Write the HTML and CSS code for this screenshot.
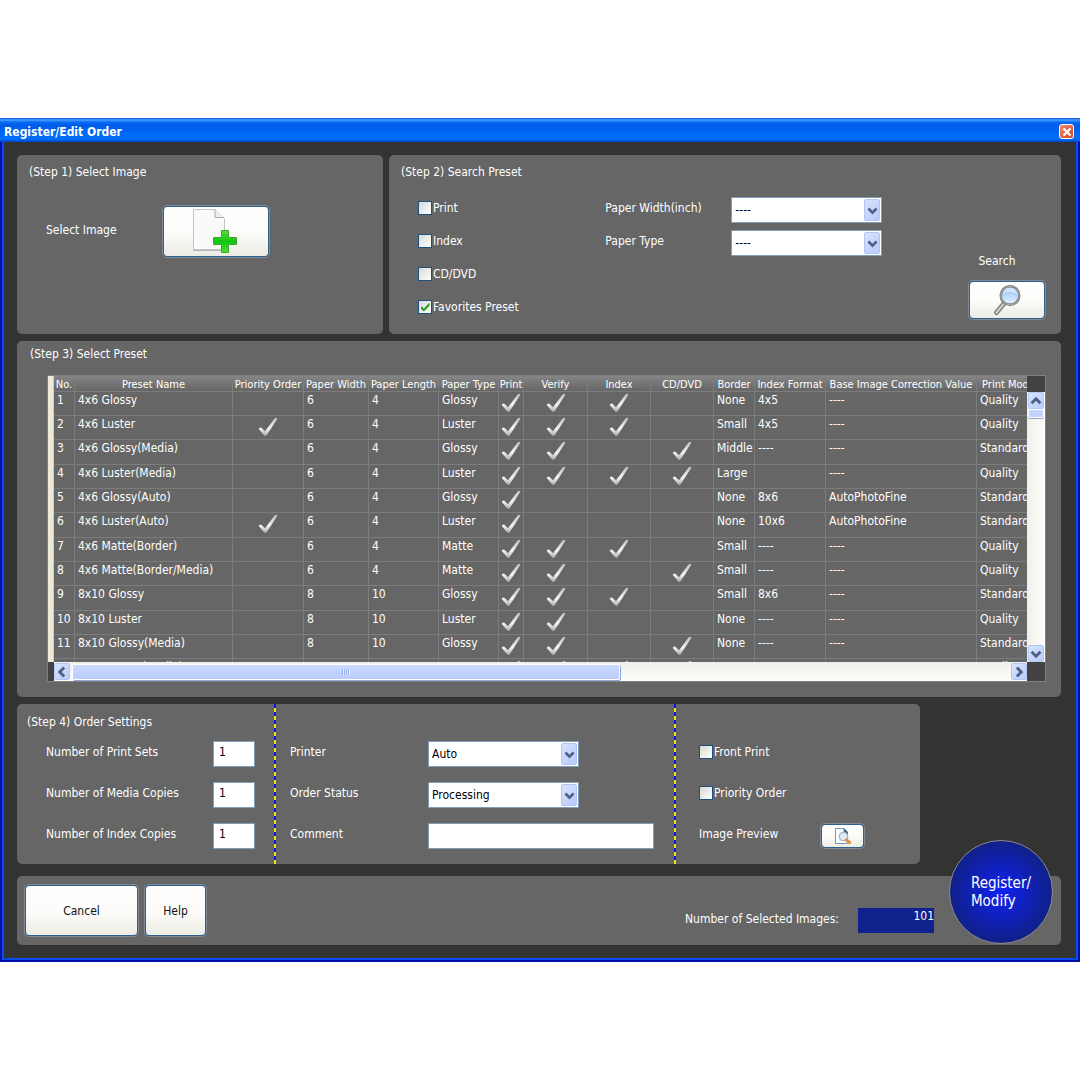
FILE: index.html
```html
<!DOCTYPE html>
<html lang="en">
<head>
<meta charset="utf-8">
<title>Register/Edit Order</title>
<link rel="stylesheet" href="styles.css">
</head>
<body>
<svg class="defs" aria-hidden="true">
  <defs>
    <linearGradient id="tickFill" x1="0" y1="0" x2="0" y2="1"><stop offset="0" stop-color="#bdbdbd"/><stop offset=".6" stop-color="#f4f4f4"/><stop offset="1" stop-color="#a8a8a8"/></linearGradient>
    <linearGradient id="plusFill" x1="0" y1="0" x2="0" y2="1"><stop offset="0" stop-color="#5fdc3c"/><stop offset=".5" stop-color="#0fc512"/><stop offset="1" stop-color="#4fdc30"/></linearGradient>
    <linearGradient id="lensFill" x1="0" y1="0" x2="0" y2="1"><stop offset="0" stop-color="#dcecff"/><stop offset=".5" stop-color="#b9daff"/><stop offset="1" stop-color="#e8f6ff"/></linearGradient>
    <symbol id="tick" viewBox="0 0 20 20"><path d="M.7 12 Q1.5 9.600 3.400 10.800 L7 14.200 L16.600 1.400 Q18.400 -.2 19.400 1.700 L8.800 18 Q7.200 20 5.600 17.800 Z" fill="url(#tickFill)"/></symbol>
    <symbol id="chev" viewBox="0 0 10 10"><path d="M1.300 3.200 L5 6.900 L8.700 3.200" fill="none" stroke="#4d6185" stroke-width="2.400"/></symbol>
  </defs>
</svg>
<main class="window">
  <header class="titlebar">
    <h1>Register/Edit Order</h1>
    <button class="close" type="button" aria-label="Close"><svg viewBox="0 0 10 10"><path d="M1.500 1.500 L8.500 8.500 M8.500 1.500 L1.500 8.500" stroke="#fff" stroke-width="2.300"/></svg></button>
  </header>
  <form class="content">
    <div class="top">
      <section class="panel step1">
        <h2>(Step 1) Select Image</h2>
        <div class="pick">
          <label for="pick">Select Image</label>
          <button class="btn pick-btn" id="pick" type="button" aria-label="Select Image">
            <svg width="48" height="46" viewBox="0 0 48 46"><path d="M1.500 .5 H23 L32.500 9.500 V40.500 H1.500 Z" fill="#fafafa" stroke="#c4c4c4"/><path d="M1 41.500 H33" stroke="#b5b5b5"/><path d="M23 .5 V8.500 H32" fill="#eee" stroke="#aaa"/><path d="M29.500 21.500 H36.500 V28.500 H44.500 V35.500 H36.500 V43.500 H29.500 V35.500 H21.500 V28.500 H29.500 Z" fill="url(#plusFill)" stroke="#3ea52c"/></svg>
          </button>
        </div>
      </section>
      <section class="panel step2">
        <h2>(Step 2) Search Preset</h2>
        <div class="search">
          <div class="rows">
            <label class="check"><input type="checkbox">Print</label>
            <label class="check"><input type="checkbox">Index</label>
            <label class="check"><input type="checkbox">CD/DVD</label>
            <label class="check"><input type="checkbox" checked>Favorites Preset</label>
          </div>
          <div class="rows">
            <div class="field"><label for="pw">Paper Width(inch)</label><span class="combo"><select id="pw"><option>----</option></select><i><svg><use href="#chev"/></svg></i></span></div>
            <div class="field"><label for="pt">Paper Type</label><span class="combo"><select id="pt"><option>----</option></select><i><svg><use href="#chev"/></svg></i></span></div>
          </div>
          <div class="go">
            <label for="go">Search</label>
            <button class="btn go-btn" id="go" type="button">
              <svg width="30" height="34" viewBox="0 0 30 34"><path d="M12 20.500 L4.500 29.500" stroke="#777" stroke-width="5" stroke-linecap="round"/><path d="M12 20.500 L4.500 29.500" stroke="#c9c9c9" stroke-width="2.600" stroke-linecap="round"/><circle cx="18" cy="12.500" r="9.300" fill="url(#lensFill)" stroke="#777" stroke-width="2.400"/><circle cx="18" cy="12.500" r="9.300" fill="none" stroke="#b9b9b9" stroke-width=".8"/><path d="M11 12 Q18 8 25 12" stroke="#9cc4ee" fill="none"/></svg>
            </button>
          </div>
        </div>
      </section>
    </div>

    <section class="panel step3">
      <h2>(Step 3) Select Preset</h2>
      <div class="grid">
        <div class="strip"></div>
        <div class="view">
          <table>
            <colgroup><col class="c-no"><col class="c-name"><col class="c-prio"><col class="c-width"><col class="c-length"><col class="c-type"><col class="c-print"><col class="c-verify"><col class="c-tick"><col class="c-tick"><col class="c-border"><col class="c-format"><col class="c-base"><col class="c-mode"></colgroup>
            <thead><tr><th>No.</th><th>Preset Name</th><th>Priority Order</th><th>Paper Width</th><th>Paper Length</th><th>Paper Type</th><th>Print</th><th>Verify</th><th>Index</th><th>CD/DVD</th><th>Border</th><th>Index Format</th><th>Base Image Correction Value</th><th>Print Mode</th></tr></thead>
            <tbody>
              <tr><td>1</td><td>4x6 Glossy</td><td></td><td>6</td><td>4</td><td>Glossy</td><td><svg><use href="#tick"/></svg></td><td><svg><use href="#tick"/></svg></td><td><svg><use href="#tick"/></svg></td><td></td><td>None</td><td>4x5</td><td>----</td><td>Quality</td></tr>
              <tr><td>2</td><td>4x6 Luster</td><td><svg><use href="#tick"/></svg></td><td>6</td><td>4</td><td>Luster</td><td><svg><use href="#tick"/></svg></td><td><svg><use href="#tick"/></svg></td><td><svg><use href="#tick"/></svg></td><td></td><td>Small</td><td>4x5</td><td>----</td><td>Quality</td></tr>
              <tr><td>3</td><td>4x6 Glossy(Media)</td><td></td><td>6</td><td>4</td><td>Glossy</td><td><svg><use href="#tick"/></svg></td><td><svg><use href="#tick"/></svg></td><td></td><td><svg><use href="#tick"/></svg></td><td>Middle</td><td>----</td><td>----</td><td>Standard</td></tr>
              <tr><td>4</td><td>4x6 Luster(Media)</td><td></td><td>6</td><td>4</td><td>Luster</td><td><svg><use href="#tick"/></svg></td><td><svg><use href="#tick"/></svg></td><td><svg><use href="#tick"/></svg></td><td><svg><use href="#tick"/></svg></td><td>Large</td><td></td><td>----</td><td>Quality</td></tr>
              <tr><td>5</td><td>4x6 Glossy(Auto)</td><td></td><td>6</td><td>4</td><td>Glossy</td><td><svg><use href="#tick"/></svg></td><td></td><td></td><td></td><td>None</td><td>8x6</td><td>AutoPhotoFine</td><td>Standard</td></tr>
              <tr><td>6</td><td>4x6 Luster(Auto)</td><td><svg><use href="#tick"/></svg></td><td>6</td><td>4</td><td>Luster</td><td><svg><use href="#tick"/></svg></td><td></td><td></td><td></td><td>None</td><td>10x6</td><td>AutoPhotoFine</td><td>Standard</td></tr>
              <tr><td>7</td><td>4x6 Matte(Border)</td><td></td><td>6</td><td>4</td><td>Matte</td><td><svg><use href="#tick"/></svg></td><td><svg><use href="#tick"/></svg></td><td><svg><use href="#tick"/></svg></td><td></td><td>Small</td><td>----</td><td>----</td><td>Quality</td></tr>
              <tr><td>8</td><td>4x6 Matte(Border/Media)</td><td></td><td>6</td><td>4</td><td>Matte</td><td><svg><use href="#tick"/></svg></td><td><svg><use href="#tick"/></svg></td><td></td><td><svg><use href="#tick"/></svg></td><td>Small</td><td>----</td><td>----</td><td>Quality</td></tr>
              <tr><td>9</td><td>8x10 Glossy</td><td></td><td>8</td><td>10</td><td>Glossy</td><td><svg><use href="#tick"/></svg></td><td><svg><use href="#tick"/></svg></td><td><svg><use href="#tick"/></svg></td><td></td><td>Small</td><td>8x6</td><td>----</td><td>Standard</td></tr>
              <tr><td>10</td><td>8x10 Luster</td><td></td><td>8</td><td>10</td><td>Luster</td><td><svg><use href="#tick"/></svg></td><td><svg><use href="#tick"/></svg></td><td></td><td></td><td>None</td><td>----</td><td>----</td><td>Quality</td></tr>
              <tr><td>11</td><td>8x10 Glossy(Media)</td><td></td><td>8</td><td>10</td><td>Glossy</td><td><svg><use href="#tick"/></svg></td><td><svg><use href="#tick"/></svg></td><td></td><td><svg><use href="#tick"/></svg></td><td>None</td><td>----</td><td>----</td><td>Standard</td></tr>
              <tr><td>12</td><td>8x10 Luster(Media)</td><td></td><td>8</td><td>10</td><td>Luster</td><td><svg><use href="#tick"/></svg></td><td><svg><use href="#tick"/></svg></td><td><svg><use href="#tick"/></svg></td><td><svg><use href="#tick"/></svg></td><td>None</td><td>----</td><td>----</td><td>Quality</td></tr>
            </tbody>
          </table>
        </div>
        <div class="corner"></div>
        <div class="vbar">
          <button class="arrow up" type="button" aria-label="Scroll up"><svg><use href="#chev"/></svg></button>
          <div class="vthumb"></div>
          <button class="arrow down" type="button" aria-label="Scroll down"><svg><use href="#chev"/></svg></button>
        </div>
        <div class="corner"></div>
        <div class="hbar">
          <button class="arrow left" type="button" aria-label="Scroll left"><svg><use href="#chev"/></svg></button>
          <div class="track"><div class="hthumb"><span class="grip"></span></div></div>
          <button class="arrow right" type="button" aria-label="Scroll right"><svg><use href="#chev"/></svg></button>
        </div>
        <div class="corner"></div>
      </div>
    </section>

    <section class="panel step4">
      <div class="col counts">
        <h2>(Step 4) Order Settings</h2>
        <div class="field"><label for="n1">Number of Print Sets</label><input class="num" id="n1" value="1"></div>
        <div class="field"><label for="n2">Number of Media Copies</label><input class="num" id="n2" value="1"></div>
        <div class="field"><label for="n3">Number of Index Copies</label><input class="num" id="n3" value="1"></div>
      </div>
      <div class="divider"></div>
      <div class="col options">
        <div class="field"><label for="pr">Printer</label><span class="combo"><select id="pr"><option>Auto</option></select><i><svg><use href="#chev"/></svg></i></span></div>
        <div class="field"><label for="os">Order Status</label><span class="combo"><select id="os"><option>Processing</option></select><i><svg><use href="#chev"/></svg></i></span></div>
        <div class="field"><label for="cm">Comment</label><input class="comment" id="cm"></div>
      </div>
      <div class="divider"></div>
      <div class="col extras">
        <label class="check"><input type="checkbox">Front Print</label>
        <label class="check"><input type="checkbox">Priority Order</label>
        <div class="field"><label for="pv">Image Preview</label>
          <button class="btn pv-btn" id="pv" type="button">
            <svg width="18" height="18" viewBox="0 0 18 18"><path d="M1.500 1.500 H10 L13.500 5 V16.500 H1.500 Z" fill="#fff" stroke="#7b93b8"/><path d="M9.500 1 L14 5.500 V11 L10 7 Z" fill="#3f587f"/><circle cx="9.500" cy="9.500" r="4.200" fill="#dcebf8" stroke="#a3b3c6" stroke-width="1.300"/><path d="M12.500 13 L15.500 15.500" stroke="#e0913a" stroke-width="3.200" stroke-linecap="round"/></svg>
          </button>
        </div>
      </div>
    </section>

    <footer class="panel foot">
      <button class="btn cancel" type="button">Cancel</button>
      <button class="btn help" type="button">Help</button>
      <label class="total" for="sel">Number of Selected Images:</label>
      <output class="selected" id="sel">101</output>
      <button class="register" type="submit"><span>Register/<br>Modify</span></button>
    </footer>
  </form>
</main>
</body>
</html>
```

FILE: styles.css
```css
* { box-sizing: border-box; }

body {
  margin: 0;
  padding: 118px 0;
  background: #fff;
  color: #fff;
  font: 12px/16px "DejaVu Sans Condensed", "Noto Sans", sans-serif;
}

button, input, select { font: inherit; margin: 0; }
button { padding: 0; cursor: pointer; }
h1, h2 { margin: 0; font-size: 12px; line-height: 16px; }
h2 { font-weight: normal; }
.defs { position: absolute; width: 0; height: 0; }

/* Window frame */
.window {
  background: #333;
  border: solid #0010a8;
  border-width: 0 2px 2px;
}

.titlebar {
  display: flex;
  align-items: center;
  justify-content: space-between;
  height: 24px;
  margin: 0 -2px;
  padding: 3px 6px 0 4px;
  background: linear-gradient(#0a50dc 0, #4aa0ff 2px, #0a6cf4 4px, #005ce8 7px, #0064f4 14px, #0070ff 21px, #0044c8 24px);
}

.close {
  display: grid;
  place-items: center;
  width: 15px;
  height: 15px;
  border: 1px solid #fff;
  border-radius: 3px;
  background: linear-gradient(135deg, #ee8a6c, #dc4318);
}
.close svg { width: 10px; height: 10px; }

.content {
  display: flex;
  flex-direction: column;
  gap: 7px;
  padding: 13px;
  border: solid #0a4cf0;
  border-width: 0 2px 2px;
}

.panel { background: #666; border-radius: 5px; margin-right: 2px; }

/* Shared controls */
.btn {
  display: grid;
  place-items: center;
  color: #111;
  border: 1px solid #2f618f;
  border-radius: 4px;
  background: linear-gradient(#fff, #fcfcfa 50%, #ecece4);
  box-shadow: 0 0 0 1px #7d8a96;
}

.check { display: flex; align-items: center; gap: 1px; height: 26px; padding-bottom: 4px; }
.check input {
  appearance: none;
  display: grid;
  place-items: center;
  width: 14px;
  height: 14px;
  border: 1px solid #1c5180;
  background: linear-gradient(135deg, #d8d8d4, #fff);
}
.check input:checked::before {
  content: "";
  width: 9px;
  height: 9px;
  background: #21a121;
  clip-path: polygon(0 35%, 38% 68%, 100% 0, 100% 35%, 38% 100%, 0 68%);
}

.field { display: flex; height: 26px; }
.field label { padding-top: 3px; }

.combo { position: relative; width: 151px; }
.combo select {
  appearance: none;
  width: 100%;
  height: 26px;
  padding: 0 3px;
  border: 1px solid #7f9db9;
  border-radius: 0;
  background: #fff;
  color: #000;
}
.combo i {
  position: absolute;
  top: 2px;
  right: 2px;
  bottom: 2px;
  display: grid;
  place-items: center;
  width: 16px;
  border: 1px solid #b3c4f4;
  border-radius: 2px;
  background: linear-gradient(135deg, #d8e3ff, #b7caf9);
  pointer-events: none;
}
.combo svg { width: 11px; height: 11px; }

.num, .comment {
  height: 26px;
  border: 1px solid #7f9db9;
  background: #fff;
  color: #000;
  padding: 0 5px 4px;
}

/* Steps 1 and 2 */
.top { display: grid; grid-template-columns: 366fr 674fr; gap: 6px; }
.top .panel { padding: 9px 12px; }
.top .step1 { margin-right: 0; }
.pick { display: flex; align-items: center; padding: 26px 0 0 17px; }
.pick label { width: 117px; padding-bottom: 4px; }
.pick-btn { width: 106px; height: 51px; }

.search { display: flex; justify-content: space-between; padding: 17px 4px 3px 17px; }
.rows { display: grid; gap: 7px; align-content: start; }
.rows .field label { width: 126px; }
.go { display: grid; gap: 12px; justify-items: center; align-content: end; padding-bottom: 3px; }
.go label { margin-right: 20px; }
.go-btn { width: 76px; height: 38px; }

/* Step 3 */
.step3 { padding: 5px 15px 15px 30px; }
.step3 h2 { margin-left: -17px; }
.grid {
  display: grid;
  grid-template: 16px 270px 19px / 6px minmax(0, 1fr) 18px;
  margin-top: 13px;
  border: 1px solid #808080;
}
.strip { grid-row: 1 / 3; background: #ece9d8; border-right: 1px solid #d0cdbf; }
.view { grid-row: 1 / 3; overflow: hidden; }
.corner { background: #424242; }

table { width: 987px; table-layout: fixed; border-collapse: separate; border-spacing: 0; }
th, td { padding: 0; white-space: nowrap; border-right: 1px solid #7c7c7c; border-bottom: 1px solid #7c7c7c; }
th {
  height: 16px;
  padding-top: 2px;
  font-size: 11px;
  line-height: 13px;
  font-weight: normal;
  background: linear-gradient(#858585, #666);
}
td { height: 24px; padding-left: 3px; vertical-align: top; }
tr:nth-child(3n) td { height: 25px; }
td svg { display: block; width: 20px; height: 20px; margin: 1px auto 0; }
td:nth-child(3) svg { margin-left: 25px; }
td:has(svg) { padding-left: 0; }
.c-no { width: 21px; }
.c-name { width: 158px; }
.c-prio { width: 71px; }
.c-width { width: 65px; }
.c-length { width: 70px; }
.c-type { width: 60px; }
.c-print { width: 25px; }
.c-verify { width: 64px; }
.c-tick { width: 63px; }
.c-border { width: 41px; }
.c-format { width: 71px; }
.c-base { width: 151px; }
.c-mode { width: 64px; }

.vbar { display: flex; flex-direction: column; align-items: center; background: linear-gradient(90deg, #f1efe9, #fefefb); }
.hbar { display: flex; align-items: center; background: linear-gradient(#f1efe9, #fefefb); }
.arrow {
  display: grid;
  place-items: center;
  width: 16px;
  height: 17px;
  border: 1px solid #b3c7f7;
  border-radius: 2px;
  background: linear-gradient(135deg, #d8e4ff, #b9ccfa);
}
.arrow svg { width: 12px; height: 12px; }
.up svg { rotate: 180deg; }
.left svg { rotate: 90deg; }
.right svg { rotate: -90deg; }
.vthumb { width: 16px; height: 9px; border: 1px solid #fff; border-radius: 2px; background: #c3d3fd; box-shadow: 0 1px 0 #8fa8d8; }
.down { margin-top: auto; }
.track { flex: 1; padding: 0 2px; }
.hthumb {
  display: grid;
  place-items: center;
  width: 58.5%;
  height: 16px;
  border: 1px solid #fff;
  border-radius: 2px;
  background: linear-gradient(#cbd9ff, #bccdfb);
  box-shadow: 1px 1px 0 #8fa8d8;
}
.grip { width: 8px; height: 6px; background: repeating-linear-gradient(90deg, #8fabe8 0 1px, #e8f0ff 1px 2px); }

/* Step 4 */
.step4 { display: grid; grid-template-columns: 257fr 2px 398fr 2px 244fr; margin-right: 143px; }
.divider { background: repeating-linear-gradient(#1414e6 0 4px, #e6e614 4px 8px); }
.col { display: grid; gap: 15px; align-content: start; padding: 37px 0 15px; }
.counts { padding: 10px 19px 15px 29px; }
.counts h2 { margin: 0 0 -4px -19px; }
.counts .field { justify-content: space-between; }
.num { width: 42px; }
.options { padding-left: 14px; }
.options label { width: 138px; }
.comment { width: 226px; }
.extras { padding-left: 23px; }
.extras .check { padding-bottom: 5px; }
.extras .field label { width: 122px; }
.pv-btn { width: 43px; height: 24px; margin-top: 1px; }

/* Footer */
.foot { position: relative; display: flex; gap: 7px; margin-top: 5px; padding: 9px 127px 9px 8px; }
.cancel { width: 113px; height: 51px; }
.help { width: 61px; height: 51px; }
.total { margin: 26px 12px 0 auto; }
.selected { width: 76px; height: 25px; margin-top: 23px; background: #10208c; text-align: right; }
.register {
  position: absolute;
  right: 8px;
  bottom: 1px;
  width: 104px;
  height: 104px;
  border: 1px solid #8a8a8a;
  border-radius: 50%;
  background: radial-gradient(circle, #1022f4, #10208c 68%);
  color: #fff;
  font-size: 15px;
  line-height: 18px;
}
.register span { display: inline-block; text-align: left; }
```
